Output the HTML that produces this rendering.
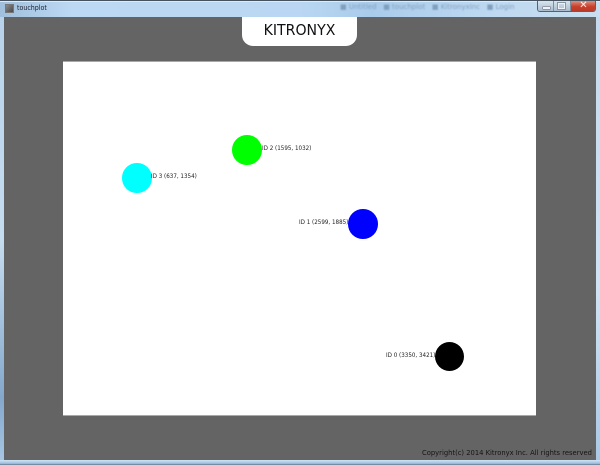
<!DOCTYPE html>
<html>
<head>
<meta charset="utf-8">
<style>
html,body{margin:0;padding:0;width:600px;height:465px;overflow:hidden;background:#b5d3ee}
*{box-sizing:border-box}
.a{position:absolute}
#frame{left:0;top:0;width:600px;height:465px;background:linear-gradient(90deg,#9fbfdc 0,#bcd9f3 12%,#b9d7f2 50%,#a9cbea 62%,#bcd8f1 80%,#c9def0 100%);overflow:hidden}
#topline{left:0;top:0;width:600px;height:1px;background:#46525e}
#top2{left:0;top:1px;width:600px;height:1px;background:#dcebf8}
#bottom{left:0;top:460px;width:600px;height:5px;background:linear-gradient(180deg,#cfe3f5,#9dbfdf 70%,#5f7387)}
#left{left:0;top:17px;width:4px;height:448px;background:linear-gradient(180deg,#b8d3ea,#c6dcef 50%,#84a8cc 85%,#a9c8e5)}
#right{left:596px;top:17px;width:4px;height:448px;background:linear-gradient(180deg,#c5daee,#d0e3f4 60%,#a9c8e5)}
#client{left:4px;top:17px;width:592px;height:443px;background:#646464}
#plot{left:63px;top:62px;width:473px;height:353px;background:#fff;box-shadow:0 -1px 0 #a8a8a8,0 1px 0 #a8a8a8}
#tab{left:242px;top:17px;width:115px;height:29px;background:#fff;border-radius:0 0 11px 11px}
#brand{left:242px;top:19.5px;width:115px;text-align:center;font:15px/20px "DejaVu Sans",sans-serif;color:#111;transform:scaleX(.94);transform-origin:50% 50%;filter:blur(.2px)}
#icon{left:5px;top:4px;width:9px;height:9px;background:linear-gradient(135deg,#8a8a8a,#4a4a4a);border:1px solid #777}
#title{left:17px;top:3px;font:7px/11px "DejaVu Sans",sans-serif;color:#223;white-space:nowrap;transform:scaleX(.9);transform-origin:0 50%;filter:blur(.2px)}
.dot{border-radius:50%;width:29.5px;height:29.5px}
.lbl{font:6px/8px "DejaVu Sans",sans-serif;color:#222;white-space:nowrap;transform:scaleX(.93);transform-origin:0 50%;filter:blur(.25px)}
#copy{left:422px;top:447.5px;font:7.45px/10px "DejaVu Sans",sans-serif;color:#141414;white-space:nowrap;transform:scaleX(.91);transform-origin:0 50%;filter:blur(.2px)}
#btns{left:537px;top:1px;width:59px;height:11px;border:1px solid #55616e;border-top:none;border-radius:0 0 3px 3px;overflow:hidden;background:#c0d4e6}
.b{position:absolute;top:0;height:10px}
#bmin{left:0;width:16px;background:linear-gradient(180deg,#d8e4ef,#a9bccd);border-right:1px solid #7f8c99}
#bmax{left:16px;width:16px;background:linear-gradient(180deg,#d8e4ef,#a9bccd)}
#bclose{left:32px;width:26px;background:linear-gradient(180deg,#dc8f80,#c8402c 55%,#b93a28);border-left:1px solid #7f8c99}
#mmin{left:5px;top:6px;width:7px;height:2px;background:#eef2f6;border:0;box-shadow:0 0 0 .5px #667}
#mmax{left:4px;top:2px;width:7px;height:6px;border:1px solid #eef2f6;outline:.5px solid #8896a4}
#mclose{left:0;top:-2px;width:25px;text-align:center;font:bold 10px/13px "DejaVu Sans",sans-serif;color:#f4f4f4}
#blur1{left:340px;top:1px;width:180px;height:14px;font:7px/12px "DejaVu Sans",sans-serif;color:#7f9fbe;filter:blur(.9px);white-space:nowrap}
</style>
</head>
<body>
<div id="frame" class="a">
  <div id="topline" class="a"></div>
  <div id="top2" class="a"></div>
  <div id="blur1" class="a">&#9632; Untitled &nbsp; &#9632; touchplot &nbsp; &#9632; KitronyxInc &nbsp; &#9632; Login</div>
  <div id="icon" class="a"></div>
  <div id="title" class="a">touchplot</div>
  <div id="btns" class="a">
    <div id="bmin" class="b"><div id="mmin" class="a"></div></div>
    <div id="bmax" class="b"><div id="mmax" class="a"></div></div>
    <div id="bclose" class="b"><div id="mclose" class="a">&#10005;</div></div>
  </div>
  <div id="left" class="a"></div>
  <div id="right" class="a"></div>
  <div id="bottom" class="a"></div>
  <div id="client" class="a"></div>
  <div id="plot" class="a"></div>
  <div id="tab" class="a"></div>
  <div id="brand" class="a">KITRONYX</div>

  <div class="a dot" style="left:232px;top:135.3px;background:#00ff00"></div>
  <div class="a lbl" style="left:261.7px;top:145px">ID 2 (1595, 1032)</div>

  <div class="a dot" style="left:122px;top:163px;background:#00ffff"></div>
  <div class="a lbl" style="left:151.3px;top:173px">ID 3 (637, 1354)</div>

  <div class="a dot" style="left:348.2px;top:209px;background:#0000ff"></div>
  <div class="a lbl" style="left:298.7px;top:219px">ID 1 (2599, 1885)</div>

  <div class="a dot" style="left:434.6px;top:341.7px;background:#000"></div>
  <div class="a lbl" style="left:385.5px;top:352px">ID 0 (3350, 3421)</div>

  <div id="copy" class="a">Copyright(c) 2014 Kitronyx Inc. All rights reserved</div>
</div>
</body>
</html>
